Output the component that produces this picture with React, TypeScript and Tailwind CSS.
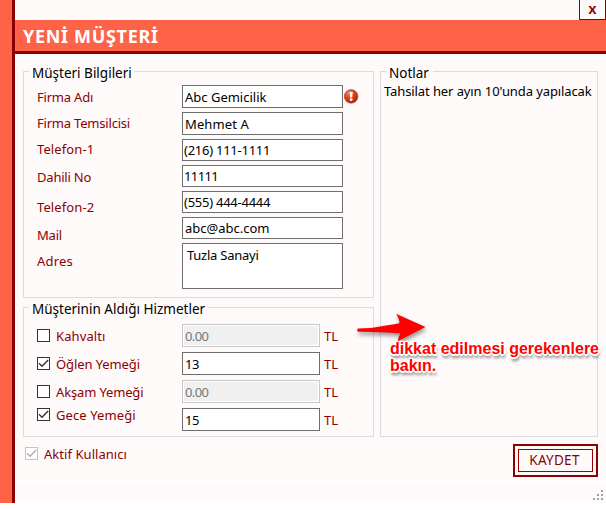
import type { ReactNode } from "react";

function Group({ title, box, legend, children }: { title: string; box: string; legend: string; children?: ReactNode }) {
  return (
    <section className={`flex flex-col border border-[#dcdcdc] ${box}`}>
      <h2 className={`-mt-2 ml-[5px] h-4 self-start whitespace-nowrap bg-[#fffafa] pl-[3px] text-[13.5px] leading-[18px] text-black ${legend}`}>{title}</h2>
      {children}
    </section>
  );
}

function Label({ text, cls }: { text: string; cls: string }) {
  return <label className={`block h-4 whitespace-nowrap leading-4 ${cls}`}>{text}</label>;
}

function Field({ text, cls }: { text: string; cls: string }) {
  return <div className={`w-[161px] shrink-0 whitespace-nowrap border border-[#6e6e6e] bg-white leading-4 text-black ${cls}`}>{text}</div>;
}

function Check({ checked, disabled, cls = "" }: { checked?: boolean; disabled?: boolean; cls?: string }) {
  const color = disabled ? "#c4c4c4" : "#333333";
  return (
    <svg width="13" height="13" viewBox="0 0 13 13" className={`shrink-0 ${cls}`}>
      <rect x="0.5" y="0.5" width="12" height="12" fill="#fff" stroke={color} />
      {checked && <path d="M2 6.3 L5 9.2 L11.2 3" fill="none" stroke={disabled ? "#b0b0b0" : "#333333"} strokeWidth="1.4" />}
    </svg>
  );
}

function Service({ name, value, checked, text, offset }: { name: string; value: string; checked?: boolean; text: string; offset: string }) {
  return (
    <div className="flex h-[23px]">
      <div className={`flex w-[145px] ${offset}`}>
        <Check checked={checked} />
        <span className={`-mt-px ml-[6px] h-4 whitespace-nowrap leading-4 ${text}`}>{name}</span>
      </div>
      <div className={checked
        ? "w-[138px] border border-[#6e6e6e] bg-white pl-[2px] pt-[3px] leading-4 tracking-[-0.5px] text-black"
        : "w-[138px] border border-[#c8c8c8] bg-[#f0f0f0] pl-[2px] pt-[3px] leading-4 tracking-[-0.6px] text-[#777777] shadow-[inset_0_0_0_1px_#fff]"}>
        {value}
      </div>
      <span className="ml-[4px] mt-[4px] leading-4">TL</span>
    </div>
  );
}

export default function App() {
  return (
    <main className="relative h-[510px] w-[606px] overflow-hidden bg-white font-['Noto_Sans','Open_Sans',sans-serif] text-[13px] text-[#8b0000]">
      <div className="flex h-[503px] bg-[#fffafa]">
        <aside className="w-[15px] shrink-0 border-r-[3px] border-[#8b0000] bg-[#ff6347]" />
        <div className="flex w-[591px] flex-col">
          <div className="flex h-5 justify-end">
            <button className="h-5 w-[27px] border border-t-0 border-[#8b0000] pb-[2px] font-['Liberation_Sans',Arial,sans-serif] text-[15px] font-bold leading-[17px]">x</button>
          </div>
          <header className="h-[34px] border-b-[3px] border-[#8b0000] bg-[#ff6347] pl-2">
            <h1 className="text-[18px] font-bold leading-[32px] tracking-[0.68px] text-white">YENİ MÜŞTERİ</h1>
          </header>
          <div className="mt-[17px] flex gap-[6px] pl-2">
            <div className="flex flex-col gap-[9px]">
              <Group title="Müşteri Bilgileri" box="h-[227px] w-[351px]" legend="w-[105px]">
                <div className="flex">
                  <div className="w-[158px] pl-[13px] pt-[9px]">
                    <Label text="Firma Adı" cls="tracking-[-0.2px]" />
                    <Label text="Firma Temsilcisi" cls="mt-[10px] tracking-[-0.2px]" />
                    <Label text="Telefon-1" cls="mt-[10px] tracking-[0.1px]" />
                    <Label text="Dahili No" cls="mt-[12px] tracking-[-0.2px]" />
                    <Label text="Telefon-2" cls="mt-[14px] tracking-[0.1px]" />
                    <Label text="Mail" cls="mt-[12px] tracking-[-0.2px]" />
                    <Label text="Adres" cls="mt-[10px] tracking-[0.2px]" />
                  </div>
                  <div className="flex flex-col gap-1 pt-[5px]">
                    <div className="flex items-center">
                      <Field text="Abc Gemicilik" cls="h-[23px] pl-[2px] pt-[3px]" />
                      <svg width="15" height="15" viewBox="0 0 15 15" className="ml-[1px] -mt-[1px]">
                        <defs>
                          <radialGradient id="alert" cx="35%" cy="25%" r="75%">
                            <stop offset="0" stopColor="#f08a68" />
                            <stop offset="0.5" stopColor="#e5401b" />
                            <stop offset="1" stopColor="#a82509" />
                          </radialGradient>
                        </defs>
                        <circle cx="7.1" cy="7.4" r="6.8" fill="url(#alert)" stroke="#b5492c" strokeWidth="0.7" />
                        <path d="M5.7 3h3l-.5 5.5H6.2z" fill="#fff" />
                        <circle cx="7.2" cy="10.7" r="1.4" fill="#fff" />
                      </svg>
                    </div>
                    <Field text="Mehmet A" cls="h-[23px] pl-[2px] pt-[3px] tracking-[0.1px]" />
                    <Field text="(216) 111-1111" cls="h-[22px] pl-[1px] pt-[2px] tracking-[-0.25px]" />
                    <Field text="11111" cls="h-[22px] pl-[1px] pt-[2px] tracking-[-0.6px]" />
                    <Field text="(555) 444-4444" cls="h-[22px] pl-[1px] pt-[2px] tracking-[-0.25px]" />
                    <Field text="abc@abc.com" cls="h-[22px] pl-[2px] pt-[2px]" />
                    <Field text="Tuzla Sanayi" cls="h-[46px] pl-[4px] pt-[3px] tracking-[-0.25px]" />
                  </div>
                </div>
              </Group>
              <Group title="Müşterinin Aldığı Hizmetler" box="h-[130px] w-[351px]" legend="w-[178px]">
                <div className="flex flex-col gap-[5px] pl-[13px] pt-[8px]">
                  <Service name="Kahvaltı" value="0.00" text="tracking-[0.1px]" offset="pt-[5px]" />
                  <Service name="Öğlen Yemeği" value="13" checked text="tracking-[-0.1px]" offset="pt-[5px]" />
                  <Service name="Akşam Yemeği" value="0.00" text="tracking-[-0.15px]" offset="pt-[5px]" />
                  <Service name="Gece Yemeği" value="15" checked text="tracking-[0.1px]" offset="pt-0" />
                </div>
              </Group>
            </div>
            <Group title="Notlar" box="h-[366px] w-[218px]" legend="w-[47px]">
              <p className="ml-[3px] mt-[3px] whitespace-nowrap leading-4 tracking-[-0.1px] text-black">Tahsilat her ayın 10'unda yapılacak</p>
            </Group>
          </div>
          <footer className="flex h-[44px] justify-between border-b border-white pl-[10px] pr-2 pt-[7px]">
            <div className="flex pt-[3px]">
              <Check checked disabled />
              <span className="-mt-px ml-[6px] h-4 leading-4 tracking-[0.05px]">Aktif Kullanıcı</span>
            </div>
            <button className="h-[33px] w-[85px] border-2 border-[#8b0000] p-[3px]">
              <span className="block h-[23px] border border-[#a00000] pr-[2px] text-[13.5px] leading-[21px] tracking-[0.3px]">KAYDET</span>
            </button>
          </footer>
          <div className="flex grow justify-end pr-[2px] pt-[9px]">
            <svg width="11" height="11" viewBox="0 0 11 11" fill="#a0a0a0">
              <path d="M8 0h2v2H8zM4 4h2v2H4zM8 4h2v2H8zM0 8h2v2H0zM4 8h2v2H4zM8 8h2v2H8z" />
            </svg>
          </div>
        </div>
      </div>
      <svg width="80" height="42" viewBox="350 308 80 42" className="absolute left-[350px] top-[308px] drop-shadow-[1px_3px_2px_rgba(0,0,0,0.4)]">
        <path d="M358 328.6 L371 328 Q390 325 399.5 323.3 Q399.5 319 396 313.8 L425.5 327 L397.8 341.2 Q398 337 400.5 333.5 Q388 332.3 371 332 L358 331.8 Q356.4 330.2 358 328.6Z" fill="#ff0000" />
      </svg>
      <p className="absolute left-[390px] top-[340px] whitespace-nowrap font-['Liberation_Sans',Arial,sans-serif] text-[16px] font-bold leading-[17px] text-[#ff0000] [text-shadow:-1px_-1px_0_#fff,1px_-1px_0_#fff,-1px_1px_0_#fff,1px_1px_0_#fff,2px_0_0_#fff,-2px_0_0_#fff,0_2px_0_#fff,1px_4px_3px_rgba(0,0,0,0.55)]">
        dikkat edilmesi gerekenlere<br />bakın.
      </p>
    </main>
  );
}
